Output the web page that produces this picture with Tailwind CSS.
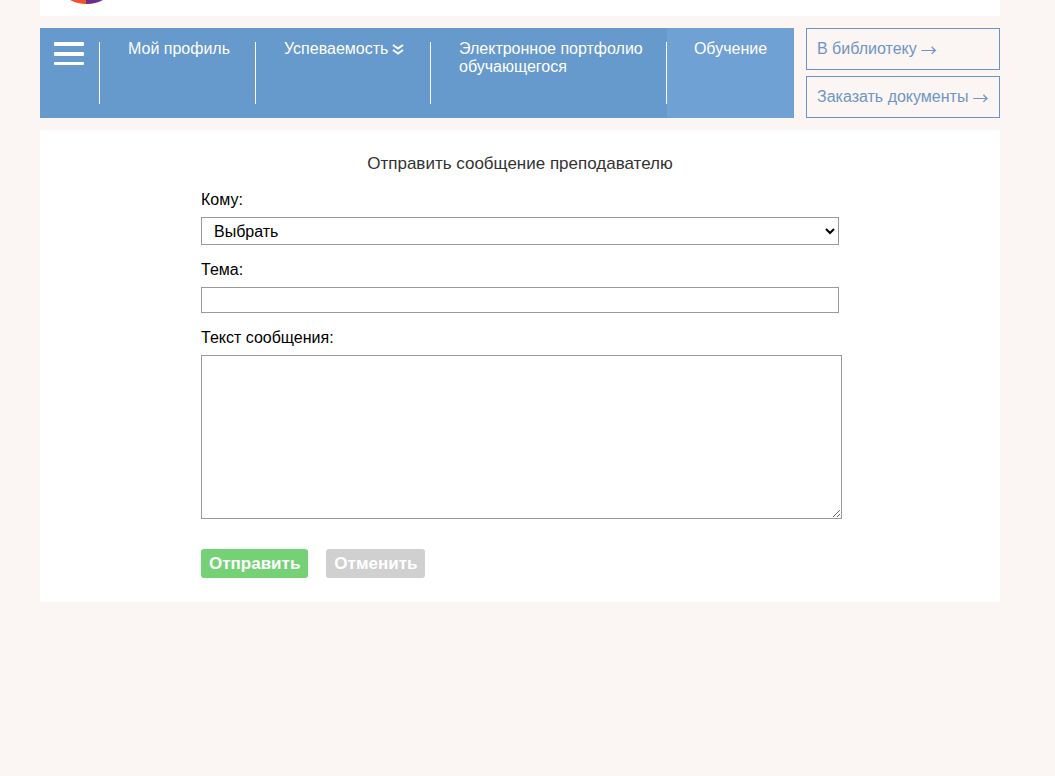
<!DOCTYPE html>
<html lang="ru">
<head>
<meta charset="utf-8">
<meta name="viewport" content="width=device-width, initial-scale=1">
<title>Отправить сообщение преподавателю</title>
<script src="https://cdn.jsdelivr.net/npm/@tailwindcss/browser@4"></script>
</head>
<body class="min-h-screen bg-[#fbf5f3] pr-[15px] font-['Liberation_Sans',Arial,sans-serif] text-base text-black">
<div class="mx-auto flex max-w-[960px] flex-col gap-3">
  <header class="h-4 bg-white pl-7">
    <svg class="block h-1 w-10" viewBox="0 0 40 4" aria-hidden="true">
      <path d="M2 0A36 36 0 0 0 18 4V0Z" fill="#f4512c"/>
      <path d="M18 4A36 36 0 0 0 35 0H18Z" fill="#6d2c91"/>
    </svg>
  </header>

  <div class="flex gap-3">
    <nav class="flex min-h-[90px] flex-1 bg-[#6699cc] leading-[18px] text-white">
      <div class="flex py-3.5">
        <button type="button" aria-label="Меню" class="flex items-start border-r border-white pr-[15px] pl-3.5">
          <svg class="h-6 w-[30px]" viewBox="0 0 30 24" fill="#fff" aria-hidden="true"><rect width="30" height="4" rx="1"/><rect y="10" width="30" height="4" rx="1"/><rect y="20" width="30" height="3" rx="1"/></svg>
        </button>
      </div>
      <div class="flex w-[156px] py-3"><a href="#" class="flex-1 pl-7 whitespace-nowrap">Мой профиль</a><span class="my-0.5 w-px bg-white"></span></div>
      <div class="flex w-[175px] py-3"><a href="#" class="flex flex-1 items-start gap-1 pl-7 whitespace-nowrap">Успеваемость
        <svg class="mt-[3px] h-3 w-3" viewBox="0 0 12 12" fill="none" stroke="#fff" stroke-width="2" aria-hidden="true"><path d="M1 2L6 5.500L11 2M1 7L6 10.500L11 7"/></svg></a><span class="my-0.5 w-px bg-white"></span></div>
      <div class="flex flex-1 py-3"><a href="#" class="flex-1 pr-4 pl-7">Электронное портфолио обучающегося</a><span class="my-0.5 w-px bg-white"></span></div>
      <a href="#" class="w-[127px] bg-[#70a1d5] py-3 text-center">Обучение</a>
    </nav>
    <div class="flex w-[194px] flex-col gap-1.5 leading-5 text-[#7095c4]">
      <a href="#" class="flex flex-1 items-center gap-1 border border-[#6c93c4] pl-2.5 whitespace-nowrap">В библиотеку <span class="font-['Noto_Sans_CJK_SC',sans-serif]">→</span></a>
      <a href="#" class="flex flex-1 items-center gap-1 border border-[#6c93c4] pl-2.5 whitespace-nowrap">Заказать документы <span class="font-['Noto_Sans_CJK_SC',sans-serif]">→</span></a>
    </div>
  </div>

  <main class="bg-white px-4 pt-6 pb-6">
    <form class="mx-auto max-w-[638px]">
      <h1 class="text-center text-[17px] leading-5 text-[#333]">Отправить сообщение преподавателю</h1>
      <label for="to" class="mt-4 block leading-5">Кому:</label>
      <select id="to" class="mt-[7px] block h-7 w-full border border-[#999] bg-white pl-2"><option>Выбрать</option></select>
      <label for="subject" class="mt-[15px] block leading-5">Тема:</label>
      <input id="subject" type="text" class="mt-[7px] block h-[26px] w-full border border-[#999] px-2">
      <label for="message" class="mt-[15px] block leading-5">Текст сообщения:</label>
      <textarea id="message" class="mt-[7px] block h-[164px] w-[641px] border border-[#999] p-2"></textarea>
      <div class="mt-[30px] flex gap-[18px] text-[17px] leading-[29px] font-bold text-white">
        <button type="submit" class="rounded-[3px] bg-[#75d175] px-2">Отправить</button>
        <button type="button" class="rounded-[3px] bg-[#d0d0d0] px-2">Отменить</button>
      </div>
    </form>
  </main>
</div>
</body>
</html>
